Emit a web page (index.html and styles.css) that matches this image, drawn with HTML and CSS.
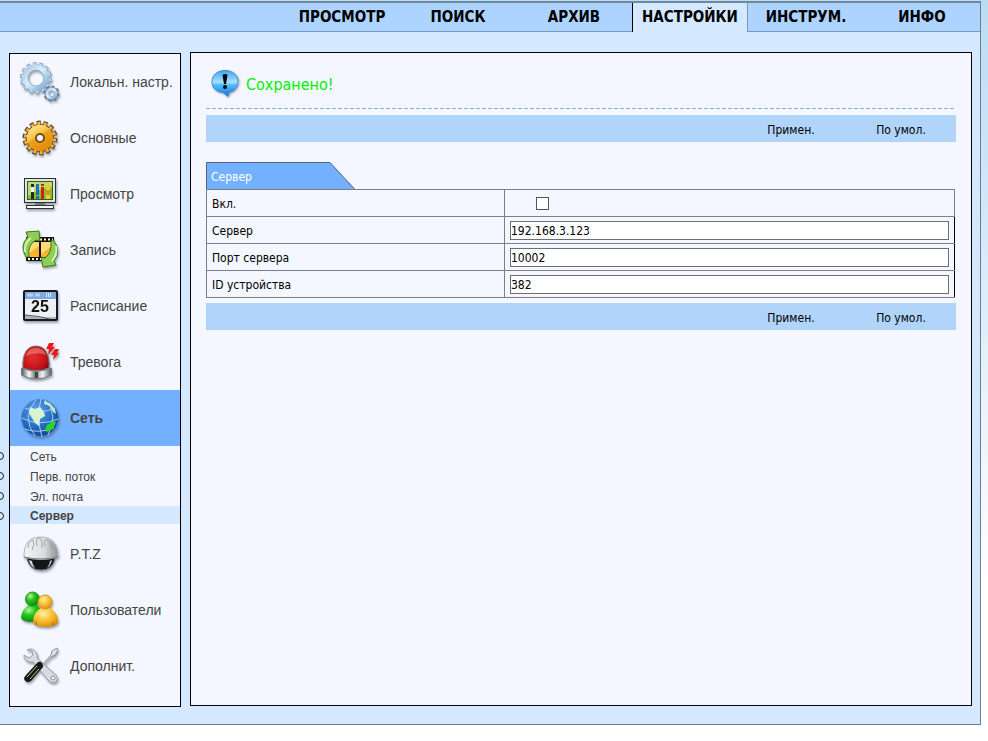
FILE: index.html
```html
<!DOCTYPE html>
<html lang="ru">
  <head>
    <meta charset="UTF-8" />
    <title>Настройки - Сервер</title>
    <meta name="viewport" content="width=device-width, initial-scale=1.0" />
    <link rel="stylesheet" href="styles.css">
  </head>
  <body>
    <div class="page">
      <nav class="topnav">
        <a href="#">ПРОСМОТР</a>
        <a href="#">ПОИСК</a>
        <a href="#">АРХИВ</a>
        <a href="#" class="active">НАСТРОЙКИ</a>
        <a href="#">ИНСТРУМ.</a>
        <a href="#">ИНФО</a>
      </nav>

      <div class="content">
        <aside class="sidebar">
          <a href="#" class="menu-item">
            <svg class="icon" viewBox="0 0 40 40">
              <defs>
                <linearGradient id="steel" x1="0" y1="0" x2="1" y2="1">
                  <stop offset="0" stop-color="#b4c8df" />
                  <stop offset="0.45" stop-color="#d4f2ff" />
                  <stop offset="1" stop-color="#7fa3cb" />
                </linearGradient>
              </defs>
              <circle cx="16" cy="16" r="13.5" fill="none" stroke="#8ba3c0" stroke-width="5" pathLength="28" stroke-dasharray="1.2 0.8" />
              <circle cx="16" cy="16" r="10.5" fill="none" stroke="#8fa6c2" stroke-width="6" />
              <circle cx="16" cy="16" r="13" fill="none" stroke="#c0d9ef" stroke-width="4" pathLength="28" stroke-dasharray="0.9 1.1" stroke-dashoffset="-0.15" />
              <circle cx="16" cy="16" r="10.7" fill="none" stroke="url(#steel)" stroke-width="5" />
              <circle cx="31.5" cy="31.5" r="6.5" fill="none" stroke="#58779c" stroke-width="3" pathLength="16" stroke-dasharray="1.1 0.9" />
              <circle cx="31.5" cy="31.5" r="4.7" fill="none" stroke="#7090b4" stroke-width="4" />
              <circle cx="31.5" cy="31.5" r="4.5" fill="none" stroke="url(#steel)" stroke-width="3" />
            </svg>
            <span>Локальн. настр.</span>
          </a>

          <a href="#" class="menu-item">
            <svg class="icon" viewBox="0 0 40 40">
              <defs>
                <linearGradient id="gold" x1="0" y1="0" x2="0.6" y2="1">
                  <stop offset="0" stop-color="#fff0a8" />
                  <stop offset="0.45" stop-color="#f6c548" />
                  <stop offset="0.55" stop-color="#e8a21c" />
                  <stop offset="1" stop-color="#e58a0c" />
                </linearGradient>
              </defs>
              <circle cx="20" cy="20" r="14.5" fill="none" stroke="#6b4510" stroke-width="6" pathLength="28" stroke-dasharray="1.2 0.8" />
              <circle cx="20" cy="20" r="14" fill="#6b4510" />
              <circle cx="20" cy="20" r="13.7" fill="none" stroke="#f0b740" stroke-width="5" pathLength="28" stroke-dasharray="0.8 1.2" stroke-dashoffset="-0.2" />
              <circle cx="20" cy="20" r="13.2" fill="url(#gold)" />
              <circle cx="20" cy="20" r="4" fill="#f4f7ff" stroke="#74501c" stroke-width="2" />
            </svg>
            <span>Основные</span>
          </a>

          <a href="#" class="menu-item">
            <svg class="icon" viewBox="0 0 40 40">
              <rect x="4.5" y="4.5" width="31" height="24" fill="#dfe5e0" stroke="#2d332f" />
              <rect x="7.5" y="7.5" width="25" height="18" fill="#85bf2e" stroke="#395c1a" />
              <path d="M8 8h24v5q-12 1-24 9z" fill="#b8dd78" />
              <path d="M11 10h3v3h-3zM11 18h3v7h-3z" fill="#252c24" />
              <path d="M11 13h3v5h-3z" fill="#f4f4ee" />
              <path d="M16 10h3v11h-3zM16 22h3v3h-3z" fill="#1a6fc4" />
              <path d="M21 10h3v2h-3zM21 13h3v12h-3z" fill="#d21f14" />
              <path d="M26 9h4v7h-4zM26 21h4v4h-4z" fill="#f4cb2b" />
              <path d="M26 17h4v3h-4z" fill="#e78d20" />
              <path d="M15 29h10v2H15z" fill="#747b77" />
              <rect x="6.5" y="31.5" width="27" height="3" fill="#f8faf8" stroke="#2d332f" />
            </svg>
            <span>Просмотр</span>
          </a>

          <a href="#" class="menu-item">
            <svg class="icon" viewBox="0 0 40 40">
              <path d="M6 7h28v24H6z" fill="#17130b" />
              <path d="M8 9.5h25M8 29h25" stroke="#fff" stroke-width="2" stroke-dasharray="2 2" />
              <path d="M8 12h11v15H8zM21 12h11v15H21z" fill="#f7b42c" />
              <path d="M8 12h11v4L8 24zM21 12h11v4l-11 8z" fill="#ffda79" />
              <path d="M6 27Q-1 15 8 7L6 2l13-1 1 10-4-1Q7 15 9 27z" fill="#8fce55" stroke="#39751d" />
              <path d="M33 10q9 10 1 21l2 4-13 2-2-10 4 1q7-5 6-17z" fill="#8fce55" stroke="#39751d" />
              <path d="M5 22q-1-9 6-14M36 16q2 8-4 15" fill="none" stroke="#d3f3ae" stroke-width="2" />
            </svg>
            <span>Запись</span>
          </a>

          <a href="#" class="menu-item">
            <svg class="icon" viewBox="0 0 40 40">
              <rect x="4" y="5" width="33" height="29" rx="1" fill="#eef0f3" stroke="#15181d" stroke-width="2" />
              <path d="M5 6h31v7H5z" fill="#7ca9df" />
              <path d="M7 9h6M15 9h5" stroke="#b5d1ef" stroke-width="3" />
              <path d="M26 9h6" stroke="#e5f0ff" stroke-width="4" stroke-dasharray="1 1" />
              <path d="M5 29q13 3 31 2v2H5z" fill="#aeb2b7" />
              <path d="M5 29q15 1 25 4" fill="none" stroke="#555b64" />
              <text class="icon-date" x="20" y="26" text-anchor="middle">25</text>
            </svg>
            <span>Расписание</span>
          </a>

          <a href="#" class="menu-item">
            <svg class="icon" viewBox="0 0 40 40">
              <defs>
                <linearGradient id="chrome" x1="0" x2="1" y1="0" y2="0">
                  <stop offset="0" stop-color="#52565a" />
                  <stop offset="0.25" stop-color="#fafafa" />
                  <stop offset="0.45" stop-color="#777c80" />
                  <stop offset="0.7" stop-color="#f1f2f3" />
                  <stop offset="1" stop-color="#55595d" />
                </linearGradient>
                <radialGradient id="red" cx="0.4" cy="0.45" r="0.7">
                  <stop offset="0" stop-color="#e62f2c" />
                  <stop offset="0.7" stop-color="#c01318" />
                  <stop offset="1" stop-color="#7f090e" />
                </radialGradient>
              </defs>
              <path d="M1.5 26q15 6 30 0v7q-15 8-30 0z" fill="url(#chrome)" stroke="#777" />
              <path d="M15 30h3v6h-3z" fill="#444" />
              <path d="M3 26C2 12 7 4 16 4s14 8 13 22q-13 5-26 0z" fill="url(#red)" stroke="#747b83" />
              <path d="M6 14q2-8 10-8 8 0 10 7-9-4-20 1z" fill="#f0a09a" opacity="0.5" />
              <path d="M29 1h5l-2 4h3l-7 8 1-6h-3z" fill="#f01818" />
              <path d="M35 7h4l-2 4h2l-6 7 1-5h-3z" fill="#f01818" />
            </svg>
            <span>Тревога</span>
          </a>

          <a href="#" class="menu-item active">
            <svg class="icon" viewBox="0 0 40 40">
              <defs>
                <radialGradient id="globe" cx="0.4" cy="0.3" r="0.75">
                  <stop offset="0" stop-color="#63a8ed" />
                  <stop offset="0.6" stop-color="#236bc2" />
                  <stop offset="1" stop-color="#0d3f8f" />
                </radialGradient>
              </defs>
              <circle cx="20" cy="20" r="18.5" fill="url(#globe)" stroke="#4e86c8" />
              <g fill="none" stroke="#a9cdf4" stroke-width="1">
                <path d="M5 10q15 7 30 0M2 20q17 9 36 1M5 31q13 5 29-1" />
                <path d="M16 2q-15 17-1 36M21 1q-5 18 1 38M25 2q14 15 3 35" />
              </g>
              <path d="M10 9l5 2 5-2 4 5 1 4-5 3-1 7-4-3-3-5-3-5z" fill="#d5f5d5" />
              <path d="M27 27l6-4 3 1-3 7-6 3-2-3z" fill="#2bd526" />
              <path d="M24 3l6 2 5 6 1 5-3-2-3-6-6-2z" fill="#bdecc9" />
            </svg>
            <span>Сеть</span>
          </a>

          <ul class="submenu">
            <li><a href="#">Сеть</a></li>
            <li><a href="#">Перв. поток</a></li>
            <li><a href="#">Эл. почта</a></li>
            <li class="active"><a href="#">Сервер</a></li>
          </ul>

          <a href="#" class="menu-item">
            <svg class="icon" viewBox="0 0 40 40">
              <defs>
                <linearGradient id="dome" x1="0" x2="1" y1="0" y2="0">
                  <stop offset="0" stop-color="#f4f4f4" />
                  <stop offset="0.6" stop-color="#d9dcde" />
                  <stop offset="1" stop-color="#8b9094" />
                </linearGradient>
              </defs>
              <path d="M7 24q2 12 14 12t14-12z" fill="#151619" stroke="#686c70" />
              <path d="M9 26q1 6 6 8-3-4-3-7M32 26q-1 5-5 8 3-4 3-7" fill="#d4d6da" />
              <path d="M4 23C4 9 9 3 21 3s17 8 17 20q-17 5-34 0z" fill="url(#dome)" stroke="#b4b8bb" />
              <path d="M8 14q0-7 5-8 2 4-1 10M17 12q-2-8 2-8 4 1 3 10M25 12q-2-8 2-6 5 3 4 9M33 15q-1-5-3-7" fill="none" stroke="#a0a5a9" />
              <path d="M4 23q17 4 34 0" fill="none" stroke="#777c80" stroke-width="1" />
            </svg>
            <span>P.T.Z</span>
          </a>

          <a href="#" class="menu-item">
            <svg class="icon" viewBox="0 0 40 40">
              <defs>
                <radialGradient id="green" cx="0.35" cy="0.3" r="0.75">
                  <stop offset="0" stop-color="#b4f49a" />
                  <stop offset="0.4" stop-color="#26c91c" />
                  <stop offset="1" stop-color="#078308" />
                </radialGradient>
                <radialGradient id="orange" cx="0.4" cy="0.3" r="0.75">
                  <stop offset="0" stop-color="#fff1a3" />
                  <stop offset="0.5" stop-color="#f9c131" />
                  <stop offset="1" stop-color="#d88708" />
                </radialGradient>
              </defs>
              <path d="M1 28q0-8 8-13h8q7 6 6 17H12Q3 32 1 28z" fill="url(#green)" />
              <circle cx="12.5" cy="9" r="7" fill="url(#green)" stroke="#2b9820" />
              <path d="M13 33q0-11 8-15h9q9 6 8 15-4 4-13 4t-12-4z" fill="url(#orange)" />
              <circle cx="25" cy="12" r="7" fill="url(#orange)" stroke="#d89522" />
              <path d="M16 31v4M33 32v4" stroke="#a96b0c" />
            </svg>
            <span>Пользователи</span>
          </a>

          <a href="#" class="menu-item">
            <svg class="icon" viewBox="0 0 40 40">
              <path d="M7 4q5-3 9 2 2 3 1 6l19 17q3 4 0 7-4 2-7-1L13 16q-6 1-9-5l0-2 5 3 4-3-1-4z" fill="#d8dbdd" stroke="#9aa0a4" />
              <circle cx="33" cy="32" r="2" fill="#f4f7ff" stroke="#858b8f" />
              <path d="M21 20L31 9l1-4 5-3 1 2-3 5-4 2-9 10z" fill="#e0e3e5" stroke="#8b9196" />
              <path d="M18 16q5-1 5 5L11 35q-5 3-7-2 0-2 2-4z" fill="#17191b" />
              <path d="M7 31l10-11M10 33l9-10" stroke="#c3c66a" stroke-width="1" />
            </svg>
            <span>Дополнит.</span>
          </a>
        </aside>

        <main class="panel">
          <div class="message">
            <svg class="message-icon" viewBox="0 0 30 30">
              <defs>
                <linearGradient id="bubble" x1="0" y1="0" x2="0" y2="1">
                  <stop offset="0" stop-color="#3fa3ea" />
                  <stop offset="0.45" stop-color="#a9e2ff" />
                  <stop offset="0.55" stop-color="#55bdfa" />
                  <stop offset="1" stop-color="#1473dc" />
                </linearGradient>
              </defs>
              <path d="M14 1.5c8 0 13 5 13 11 0 6-4 10-9 11l-1 4-5-4C5 23 1 19 1 12.500 1 6.500 6 1.500 14 1.500z" fill="url(#bubble)" stroke="#3c8ed2" />
              <path d="M11.5 6q2.500-2 5 0l-1.500 9h-2z" fill="#000" />
              <circle cx="14" cy="18" r="2" fill="#000" />
            </svg>
            <span>Сохранено!</span>
          </div>

          <div class="toolbar">
            <button type="submit" form="server_form">Примен.</button>
            <button type="reset" form="server_form">По умол.</button>
          </div>

          <form id="server_form" class="server-form">
            <div class="tab-title">
              <svg class="tab-shape" viewBox="0 0 150 28">
                <path d="M0.5 28V0.5H124L149.5 28" fill="#73b0ff" stroke="#51657f" />
              </svg>
              <span>Сервер</span>
            </div>
            <table class="settings">
              <tr>
                <th><label for="enable">Вкл.</label></th>
                <td><input type="checkbox" id="enable" /></td>
              </tr>
              <tr>
                <th><label for="server">Сервер</label></th>
                <td><input type="text" id="server" value="192.168.3.123" /></td>
              </tr>
              <tr>
                <th><label for="port">Порт сервера</label></th>
                <td><input type="text" id="port" value="10002" /></td>
              </tr>
              <tr>
                <th><label for="device_id">ID устройства</label></th>
                <td><input type="text" id="device_id" value="382" /></td>
              </tr>
            </table>
          </form>

          <div class="toolbar">
            <button type="submit" form="server_form">Примен.</button>
            <button type="reset" form="server_form">По умол.</button>
          </div>
        </main>
      </div>
    </div>
  </body>
</html>
```
FILE: styles.css
```css
* {
  box-sizing: border-box;
}
body {
  margin: 0;
  padding: 1px 7px 16px 0;
  background: linear-gradient(#b9dcf6, #ffffff 600px);
  font-family: "DejaVu Sans Condensed", "DejaVu Sans", sans-serif;
  font-stretch: condensed;
  font-size: 12px;
  color: #000;
}
a {
  color: inherit;
  text-decoration: none;
}
.page {
  background: #d4e8ff;
  border: 1px solid #737b86;
  border-left: none;
  border-top: 2px solid #71889c;
}
.topnav {
  display: grid;
  grid-template-columns: repeat(6, 116px);
  justify-content: end;
  height: 29px;
  background: #add4ff;
  box-shadow: inset 0 -1px #7b98bb;
  font-size: 15px;
  font-weight: bold;
  line-height: 29px;
  text-align: center;
}
.topnav .active {
  background: #d4e8ff;
  border-left: 1px solid #000;
  border-right: 1px solid #7b98bb;
}
.content {
  display: flex;
  gap: 9px;
  padding: 20px 8px 17px 9px;
}
.sidebar {
  flex: 0 0 172px;
  margin-top: 1px;
  padding-bottom: 12px;
  background: #f4f7ff;
  border: 1px solid #000;
  font-family: "Liberation Sans", Arial, sans-serif;
  color: #444;
}
.menu-item {
  display: flex;
  align-items: center;
  gap: 10px;
  height: 56px;
  padding-left: 10px;
  font-size: 14px;
  white-space: nowrap;
}
.menu-item.active {
  background: #73b0ff;
  font-weight: bold;
}
.icon {
  flex: none;
  width: 40px;
  height: 40px;
  filter: drop-shadow(1px 2px 1px rgba(70, 80, 100, 0.5));
}
.icon-date {
  font: bold 16px "Liberation Sans Narrow", "Liberation Sans", sans-serif;
  fill: #111;
}
.submenu {
  list-style: none;
  margin: 0;
  padding: 0 0 2px;
}
.submenu li {
  position: relative;
  height: 20px;
  padding-left: 20px;
  line-height: 22px;
}
.submenu li.active {
  height: 18px;
  line-height: 20px;
  background: #d4e8ff;
  font-weight: bold;
}
/* circle markers hang outside the menu box */
.submenu li::before {
  content: "";
  position: absolute;
  left: -13px;
  top: 7px;
  width: 6px;
  height: 6px;
  margin: -1px 0 0 -1px;
  border: 1px solid #222;
  border-radius: 50%;
}
.panel {
  flex: 1;
  min-width: 0;
  margin-bottom: 1px;
  padding: 15px;
  background: #f4f7ff;
  border: 1px solid #000;
}
.message {
  display: flex;
  align-items: center;
  gap: 5px;
  height: 41px;
  margin-right: 2px;
  padding: 0 0 9px 5px;
  background: repeating-linear-gradient(90deg, #86addb 0 4px, transparent 4px 6px) bottom / 100% 1px no-repeat;
  color: #00f000;
  font-size: 16px;
}
.message-icon {
  width: 30px;
  height: 30px;
  filter: drop-shadow(1px 1px 1px rgba(70, 80, 100, 0.5));
}
.toolbar {
  display: flex;
  justify-content: flex-end;
  height: 27px;
  margin-top: 6px;
  background: #b0d4fa;
}
.toolbar button {
  width: 110px;
  padding: 2px 0 0;
  border: none;
  background: none;
  font: inherit;
  color: #000;
  cursor: pointer;
}
.server-form {
  margin: 20px 1px 0 0;
}
.server-form + .toolbar {
  margin-top: 5px;
}
.tab-title {
  display: grid;
  height: 27px;
  color: #fff;
  line-height: 30px;
}
.tab-title > * {
  grid-area: 1 / 1;
}
.tab-title span {
  padding-left: 5px;
}
.tab-shape {
  width: 150px;
  height: 28px;
}
.settings {
  position: relative;
  width: 100%;
  border-collapse: collapse;
}
.settings tr {
  height: 27px;
}
.settings th,
.settings td {
  padding: 0 5px;
  border: 1px solid #7b7f87;
}
.settings th {
  width: 298px;
  padding-top: 2px;
  font-weight: normal;
  text-align: left;
}
.settings tr + tr td {
  border-right-color: #000;
}
.settings input[type="text"] {
  display: block;
  width: 100%;
  height: 19px;
  padding: 2px 1px 0 0;
  border: 1px solid #6d6f74;
  background: #fff;
  font: inherit;
}
.settings input[type="checkbox"] {
  display: block;
  appearance: none;
  width: 13px;
  height: 13px;
  margin: 0 0 0 26px;
  border: 1px solid #555;
  background: #fff;
}
.settings input[type="checkbox"]:checked {
  background: #555;
  box-shadow: inset 0 0 0 2px #fff;
}
```
